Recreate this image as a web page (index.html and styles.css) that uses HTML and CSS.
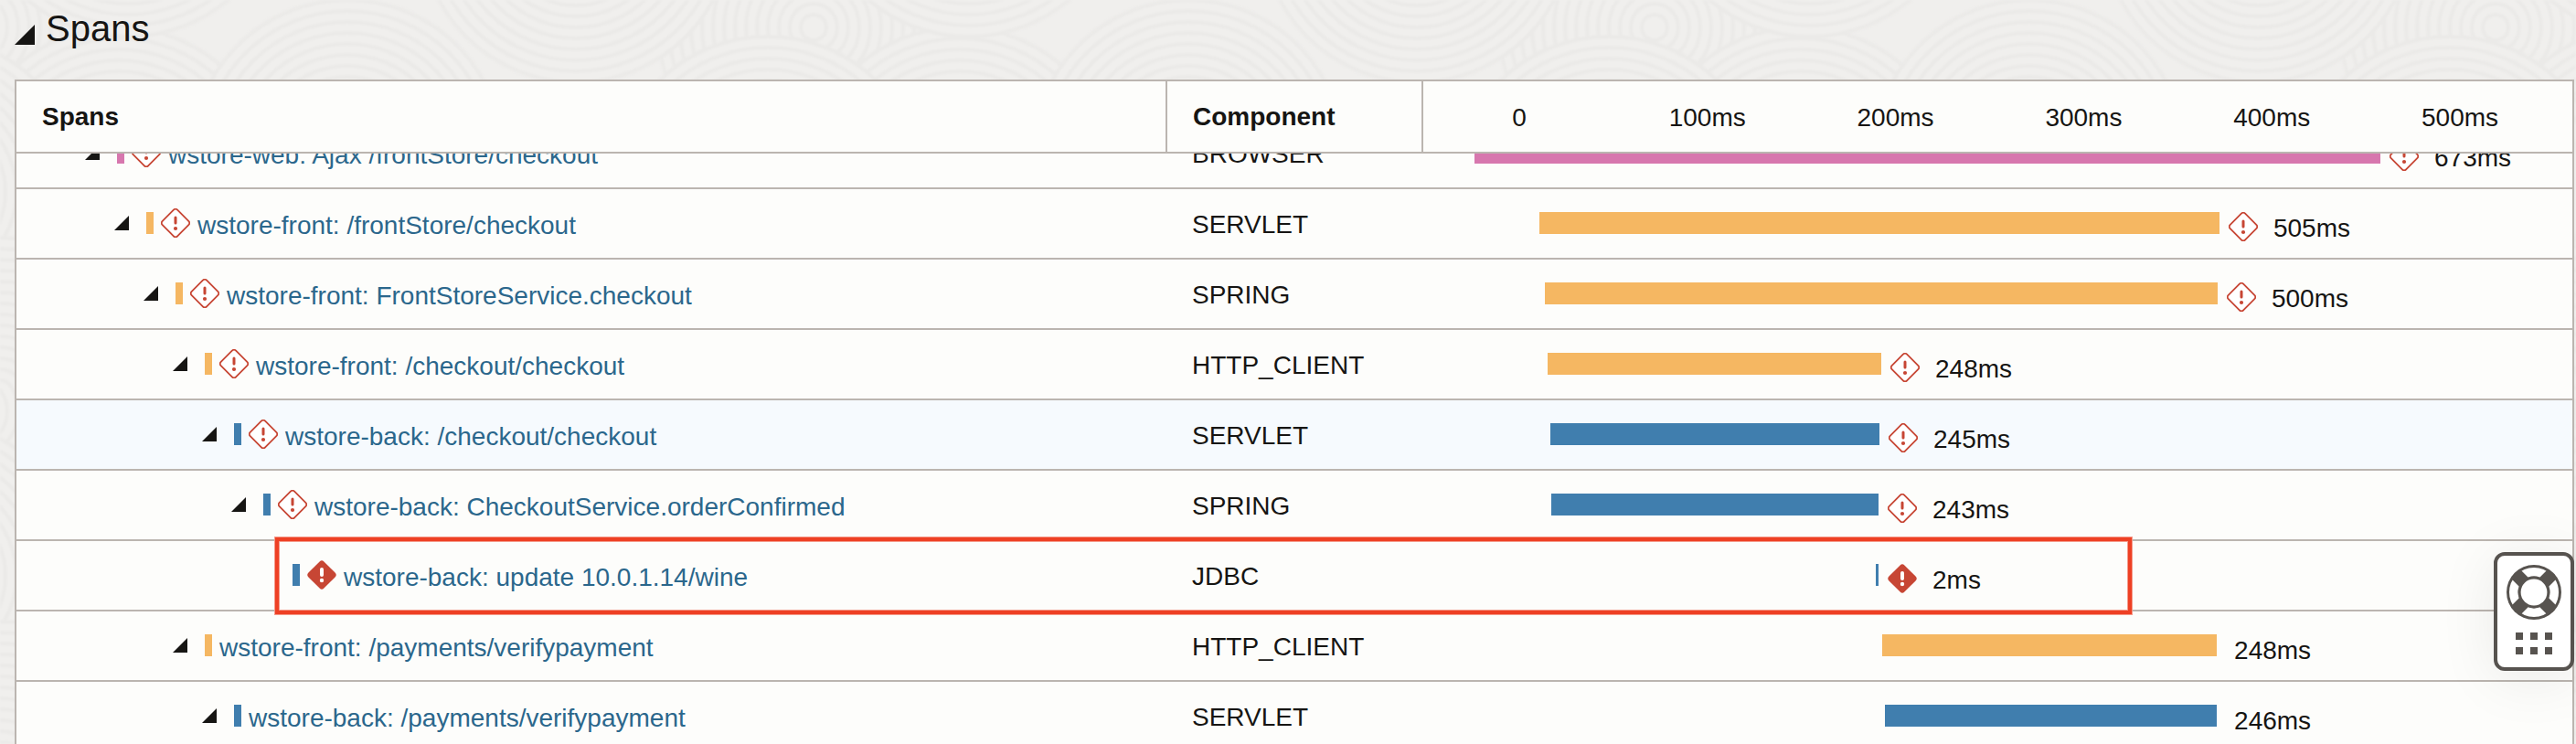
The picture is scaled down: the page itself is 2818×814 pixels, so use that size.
FILE: index.html
```html
<!DOCTYPE html>
<html lang="en">
<head>
<meta charset="utf-8">
<title>Spans</title>
<link rel="stylesheet" href="styles.css">
</head>
<body>
<svg class="texture" aria-hidden="true">
  <defs>
    <g id="rings" fill="none" stroke="#ebeae8" stroke-width="4">
      <circle r="170" fill="#f0efed"/><circle r="158"/><circle r="146"/><circle r="134"/><circle r="122"/><circle r="110"/><circle r="98"/><circle r="86"/><circle r="74"/><circle r="62"/><circle r="50"/><circle r="38"/><circle r="26"/><circle r="14"/>
    </g>
    <pattern id="waves" width="920" height="420" patternUnits="userSpaceOnUse">
      <use href="#rings" x="890" y="30"/>
      <use href="#rings" x="-30" y="30"/>
      <use href="#rings" x="130" y="200"/>
      <use href="#rings" x="140" y="-130"/>
      <use href="#rings" x="380" y="170"/>
      <use href="#rings" x="840" y="210"/>
      <use href="#rings" x="-80" y="210"/>
      <use href="#rings" x="630" y="-80"/>
      <use href="#rings" x="600" y="330"/>
      <use href="#rings" x="250" y="400"/>
      <use href="#rings" x="0" y="430"/>
      <use href="#rings" x="920" y="430"/>
    </pattern>
    <symbol id="alert" viewBox="0 0 32 32">
      <rect x="4.4" y="4.4" width="23.2" height="23.2" rx="3" transform="rotate(45 16 16)" fill="#fff" stroke="#c74634" stroke-width="1.8"/>
      <path d="M16 10v6" stroke="#c74634" stroke-width="3" stroke-linecap="round"/>
      <circle cx="16" cy="22" r="2.1" fill="#c74634"/>
    </symbol>
    <symbol id="alert-solid" viewBox="0 0 32 32">
      <rect x="4" y="4" width="24" height="24" rx="3.4" transform="rotate(45 16 16)" fill="#c74634"/>
      <path d="M16 10v6" stroke="#fff" stroke-width="4" stroke-linecap="round"/>
      <circle cx="16" cy="22" r="2.2" fill="#fff"/>
    </symbol>
  </defs>
  <rect class="waves" width="100%" height="100%" fill="url(#waves)"/>
</svg>

<header class="section-head">
  <button class="toggle toggle-large" type="button" aria-label="Collapse spans section"></button>
  <h1>Spans</h1>
</header>

<main class="panel">
<table class="spans">
  <thead>
    <tr>
      <th scope="col">Spans</th>
      <th scope="col">Component</th>
      <th scope="col" class="axis" aria-label="Timeline">
        <div class="ticks"><span>0</span><span>100ms</span><span>200ms</span><span>300ms</span><span>400ms</span><span>500ms</span></div>
      </th>
    </tr>
  </thead>
  <tbody>
    <tr class="web">
      <td><div class="node" style="--level:0"><button class="toggle" type="button" aria-label="Collapse"></button><i class="swatch"></i><svg class="icon"><use href="#alert"/></svg><a href="#s1">wstore-web: Ajax /frontStore/checkout</a></div></td>
      <td class="component">BROWSER</td>
      <td><div class="lane" style="--start:4.46%;--len:78.84%"><i class="bar"></i><svg class="icon"><use href="#alert"/></svg><span class="time">673ms</span></div></td>
    </tr>
    <tr class="front">
      <td><div class="node" style="--level:1"><button class="toggle" type="button" aria-label="Collapse"></button><i class="swatch"></i><svg class="icon"><use href="#alert"/></svg><a href="#s2">wstore-front: /frontStore/checkout</a></div></td>
      <td class="component">SERVLET</td>
      <td><div class="lane" style="--start:10.1%;--len:59.19%"><i class="bar"></i><svg class="icon"><use href="#alert"/></svg><span class="time">505ms</span></div></td>
    </tr>
    <tr class="front">
      <td><div class="node" style="--level:2"><button class="toggle" type="button" aria-label="Collapse"></button><i class="swatch"></i><svg class="icon"><use href="#alert"/></svg><a href="#s3">wstore-front: FrontStoreService.checkout</a></div></td>
      <td class="component">SPRING</td>
      <td><div class="lane" style="--start:10.58%;--len:58.55%"><i class="bar"></i><svg class="icon"><use href="#alert"/></svg><span class="time">500ms</span></div></td>
    </tr>
    <tr class="front">
      <td><div class="node" style="--level:3"><button class="toggle" type="button" aria-label="Collapse"></button><i class="swatch"></i><svg class="icon"><use href="#alert"/></svg><a href="#s4">wstore-front: /checkout/checkout</a></div></td>
      <td class="component">HTTP_CLIENT</td>
      <td><div class="lane" style="--start:10.82%;--len:29.04%"><i class="bar"></i><svg class="icon"><use href="#alert"/></svg><span class="time">248ms</span></div></td>
    </tr>
    <tr class="back hovered">
      <td><div class="node" style="--level:4"><button class="toggle" type="button" aria-label="Collapse"></button><i class="swatch"></i><svg class="icon"><use href="#alert"/></svg><a href="#s5">wstore-back: /checkout/checkout</a></div></td>
      <td class="component">SERVLET</td>
      <td><div class="lane" style="--start:11.06%;--len:28.64%"><i class="bar"></i><svg class="icon"><use href="#alert"/></svg><span class="time">245ms</span></div></td>
    </tr>
    <tr class="back">
      <td><div class="node" style="--level:5"><button class="toggle" type="button" aria-label="Collapse"></button><i class="swatch"></i><svg class="icon"><use href="#alert"/></svg><a href="#s6">wstore-back: CheckoutService.orderConfirmed</a></div></td>
      <td class="component">SPRING</td>
      <td><div class="lane" style="--start:11.14%;--len:28.48%"><i class="bar"></i><svg class="icon"><use href="#alert"/></svg><span class="time">243ms</span></div></td>
    </tr>
    <tr class="back failed">
      <td><div class="node" style="--level:6"><span class="leaf"></span><i class="swatch"></i><svg class="icon"><use href="#alert-solid"/></svg><a href="#s7">wstore-back: update 10.0.1.14/wine</a></div></td>
      <td class="component">JDBC</td>
      <td><div class="lane" style="--start:39.38%;--len:0.24%"><i class="bar"></i><svg class="icon"><use href="#alert-solid"/></svg><span class="time">2ms</span></div></td>
    </tr>
    <tr class="front">
      <td><div class="node" style="--level:3"><button class="toggle" type="button" aria-label="Collapse"></button><i class="swatch"></i><a href="#s8">wstore-front: /payments/verifypayment</a></div></td>
      <td class="component">HTTP_CLIENT</td>
      <td><div class="lane" style="--start:39.94%;--len:29.12%"><i class="bar"></i><span class="time">248ms</span></div></td>
    </tr>
    <tr class="back">
      <td><div class="node" style="--level:4"><button class="toggle" type="button" aria-label="Collapse"></button><i class="swatch"></i><a href="#s9">wstore-back: /payments/verifypayment</a></div></td>
      <td class="component">SERVLET</td>
      <td><div class="lane" style="--start:40.18%;--len:28.88%"><i class="bar"></i><span class="time">246ms</span></div></td>
    </tr>
  </tbody>
</table>
</main>

<button class="help" type="button" aria-label="Help">
  <svg viewBox="0 0 80 122" aria-hidden="true">
    <circle cx="40" cy="40" r="30" fill="#57534f"/>
    <circle cx="40" cy="40" r="22.2" fill="none" stroke="#fff" stroke-width="9.6"/>
    <path d="M20 20l40 40M60 20L20 60" stroke="#57534f" stroke-width="14"/>
    <circle cx="40" cy="40" r="17.4" fill="#57534f"/>
    <circle cx="40" cy="40" r="14.4" fill="#fff"/>
    <path d="M20 84h8v8h-8zM36 84h8v8h-8zM52 84h8v8h-8zM20 100h8v8h-8zM36 100h8v8h-8zM52 100h8v8h-8z" fill="#57534f"/>
  </svg>
</button>
</body>
</html>
```

FILE: styles.css
```css
*,
*::after {
  box-sizing: border-box;
}

body {
  --line: #bbb5b0;
  --ink: #161513;
  --surface: #fdfdfb;
  display: flex;
  flex-direction: column;
  height: 100vh;
  margin: 0;
  overflow: hidden;
  background: #f0efed;
  color: var(--ink);
  font: 28px/36px "Liberation Sans", Arial, sans-serif;
}

.texture {
  position: absolute;
  inset: 0;
  z-index: -1;
  width: 100%;
  height: 100%;
}

.waves {
  filter: blur(1px);
}

.section-head {
  display: flex;
  gap: 12px;
  padding: 7px 16px 32px;
}

.section-head h1 {
  margin: 0;
  font-size: 40px;
  font-weight: 400;
  line-height: 48px;
}

.toggle {
  flex: none;
  width: 16px;
  height: 16px;
  margin: 0 11px 0 0;
  padding: 0;
  border: 0;
  background: var(--ink);
  clip-path: polygon(100% 0, 100% 100%, 0 100%);
}

.toggle-large {
  align-self: flex-end;
  width: 22px;
  height: 22px;
  margin: 0 0 6px;
}

.panel {
  flex: 1;
  min-height: 0;
  margin: 0 2px 0 16px;
  overflow: hidden;
  border: 2px solid var(--line);
  border-bottom: 0;
  background: var(--surface);
}

.spans,
.spans thead,
.spans tbody {
  display: block;
}

.spans tr {
  display: grid;
  grid-template-columns: minmax(0, 1259fr) 280px minmax(0, 1257fr);
  position: relative;
  height: 77px;
  border-bottom: 2px solid var(--line);
}

.spans thead {
  position: relative;
  z-index: 1;
  background: var(--surface);
}

.spans thead tr {
  height: 79px;
}

/* The list is scrolled half a row under the fixed header. */
.spans tbody {
  margin-top: -38px;
}

.spans th {
  padding: 0 28px;
  border-right: 2px solid var(--line);
  text-align: left;
  line-height: 77px;
}

.spans .axis {
  padding: 0 20px 0 2px;
  border-right: 0;
  font-weight: 400;
}

.ticks {
  display: grid;
  grid-template-columns: repeat(6, 1fr);
  padding-top: 1px;
  text-align: center;
}

.spans td {
  padding: 0;
}

.spans .component {
  padding: 21px 27px 0;
}

.node {
  display: flex;
  align-items: center;
  gap: 8px;
  padding: 18px 0 0 calc(75px + 32px * var(--level));
}

.node a {
  padding-top: 6px;
  color: #2b678c;
  line-height: 32px;
  text-decoration: none;
  white-space: nowrap;
}

.leaf {
  flex: none;
  width: 27px;
}

.swatch {
  flex: none;
  width: 8px;
  height: 24px;
  background: var(--tone);
}

.icon {
  flex: none;
  width: 32px;
  height: 32px;
}

.lane {
  display: flex;
  padding-top: 25px;
}

.bar {
  flex: none;
  width: var(--len);
  height: 24px;
  margin-left: var(--start);
  background: var(--tone);
}

.lane .icon {
  margin-left: 10px;
}

.time {
  margin-left: 19px;
  line-height: 35px;
}

.icon + .time {
  margin-left: 17px;
}

.web {
  --tone: #d777ae;
}

.front {
  --tone: #f5b762;
}

.back {
  --tone: #407eae;
}

.hovered {
  background: #f6fafe;
}

.failed::after {
  content: "";
  position: absolute;
  top: -4px;
  bottom: -5px;
  left: 283px;
  width: 2031px;
  max-width: calc(100% - 283px);
  border: 4px solid #ee4024;
  outline: 1px solid #f49a8a;
  outline-offset: -5px;
  box-shadow: 0 0 0 1px #f49a8a;
}

.help {
  position: absolute;
  top: 604px;
  right: 2px;
  z-index: 2;
  width: 88px;
  height: 130px;
  padding: 0;
  border: 4px solid #57534f;
  border-radius: 12px;
  background: #fff;
  box-shadow: 0 8px 64px rgba(22, 21, 19, 0.08);
}

.help svg {
  display: block;
  width: 100%;
}
```
